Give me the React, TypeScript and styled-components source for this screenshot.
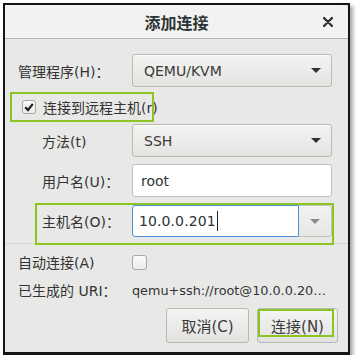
import React from "react";
import styled, { createGlobalStyle } from "styled-components";

const GlobalStyle = createGlobalStyle`
  html, body { margin: 0; padding: 0; background: #ffffff; }
  body { font-family: "DejaVu Sans", "Noto Sans CJK SC", sans-serif; font-size: 14px; color: #2e3436; }
`;

const Frame = styled.div`
  margin: 3px 0 0 3px;
  width: 343px;
  border: 2px solid #151515;
  border-bottom-width: 3px;
  background: #e8e8e7;
  box-shadow: 3px 3px 4px rgba(0, 0, 0, 0.35);
`;

const TitleBar = styled.div`
  height: 33px;
  display: flex;
  align-items: center;
  justify-content: center;
  position: relative;
  background: #f2f2f2;
  border-bottom: 1px solid #b4b4b2;
  border-top-right-radius: 6px;
`;

const Title = styled.div`
  font-family: "Noto Sans CJK SC", sans-serif;
  font-weight: 700;
  font-size: 16px;
  color: #2e3436;
`;

const CloseButton = styled.div`
  position: absolute;
  right: 15px;
  top: 12px;
  width: 10px;
  height: 10px;
  display: flex;
`;

const Body = styled.div`
  display: flex;
  flex-direction: column;
  padding-bottom: 9px;
`;

const Row = styled.div<{ $h: number; $mt: number }>`
  position: relative;
  height: ${(p) => p.$h}px;
  margin-top: ${(p) => p.$mt}px;
  display: grid;
  grid-template-columns: 127px 200px;
  align-items: center;
`;

const Label = styled.div<{ $indent?: boolean }>`
  padding-left: ${(p) => (p.$indent ? 37 : 13)}px;
  white-space: nowrap;
  color: #333;
`;

const Combo = styled.div`
  height: 33px;
  box-sizing: border-box;
  border: 1px solid #b8b8b5;
  border-radius: 3px;
  background: linear-gradient(#f3f3f2, #e4e4e2);
  box-shadow: 0 1px 0 rgba(255, 255, 255, 0.8) inset;
  display: flex;
  align-items: center;
  justify-content: space-between;
  padding: 0 10px 0 11px;
  color: #3a3a3a;
`;

const Arrow = styled.div<{ $color?: string }>`
  width: 0;
  height: 0;
  border-left: 5px solid transparent;
  border-right: 5px solid transparent;
  border-top: 5px solid ${(p) => p.$color || "#2e3436"};
`;

const Entry = styled.div`
  height: 33px;
  box-sizing: border-box;
  border: 1px solid #c0c0bd;
  border-radius: 3px;
  background: #ffffff;
  display: flex;
  align-items: center;
  padding-left: 8px;
  color: #2e3436;
`;

const HostCombo = styled.div`
  height: 32px;
  display: flex;
`;

const HostEntry = styled.div`
  flex: 1;
  box-sizing: border-box;
  border: 1px solid #4a90d9;
  border-radius: 3px 0 0 3px;
  background: #ffffff;
  display: flex;
  align-items: center;
  padding-left: 6px;
  color: #2e3436;
  letter-spacing: 0.1px;
`;

const Caret = styled.span`
  display: inline-block;
  width: 1px;
  height: 20px;
  background: #222;
  margin-left: 1px;
`;

const HostButton = styled.div`
  width: 33px;
  box-sizing: border-box;
  border: 1px solid #c4c4c1;
  border-left: none;
  border-radius: 0 3px 3px 0;
  background: linear-gradient(#f3f3f2, #e6e6e4);
  display: flex;
  align-items: center;
  justify-content: center;
`;

const CheckRow = styled.label`
  grid-column: 1 / span 2;
  display: flex;
  align-items: center;
  padding-left: 17px;
  gap: 7px;
  color: #333;
`;

const CheckBox = styled.div<{ $size: number }>`
  width: ${(p) => p.$size}px;
  height: ${(p) => p.$size}px;
  box-sizing: border-box;
  border: 1px solid #a8a8a6;
  border-radius: 3px;
  background: linear-gradient(#fafafa, #ececeb);
  display: flex;
  align-items: center;
  justify-content: center;
`;

const Highlight = styled.div<{ $l: number; $t: number; $w: number; $hh: number }>`
  position: absolute;
  left: ${(p) => p.$l}px;
  top: ${(p) => p.$t}px;
  width: ${(p) => p.$w}px;
  height: ${(p) => p.$hh}px;
  box-sizing: border-box;
  border: 2px solid #8cc425;
  pointer-events: none;
`;

const Separator = styled.div`
  height: 1px;
  margin-top: 6px;
  background: #d3d3d1;
`;

const UriText = styled.div`
  white-space: nowrap;
  font-size: 12.8px;
  color: #333;
`;

const ButtonRow = styled.div`
  display: flex;
  justify-content: flex-end;
  gap: 8px;
  margin-top: 8px;
  padding-right: 10px;
`;

const Button = styled.div<{ $w: number }>`
  position: relative;
  width: ${(p) => p.$w}px;
  height: 35px;
  box-sizing: border-box;
  border: 1px solid #b8b8b5;
  border-radius: 3px;
  background: linear-gradient(#f4f4f3, #e2e2e0);
  display: flex;
  align-items: center;
  justify-content: center;
  color: #3a3a3a;
  font-size: 15px;
`;

export default function App() {
  return (
    <>
      <GlobalStyle />
      <Frame>
        <TitleBar>
          <Title>添加连接</Title>
          <CloseButton>
            <svg width="10" height="10" viewBox="0 0 10 10">
              <path d="M1 1 L9 9 M9 1 L1 9" stroke="#2e3436" strokeWidth="2.4" strokeLinecap="round" />
            </svg>
          </CloseButton>
        </TitleBar>
        <Body>
          <Row $h={33} $mt={15}>
            <Label>管理程序(H)：</Label>
            <Combo>
              <span>QEMU/KVM</span>
              <Arrow />
            </Combo>
          </Row>
          <Row $h={31} $mt={4}>
            <CheckRow>
              <CheckBox $size={14}>
                <svg width="10" height="10" viewBox="0 0 10 10">
                  <path d="M1.2 5.2 L4 8 L8.8 1.8" fill="none" stroke="#1e1e1e" strokeWidth="2.2" />
                </svg>
              </CheckBox>
              <span>连接到远程主机(r)</span>
            </CheckRow>
            <Highlight $l={5} $t={1} $w={144} $hh={30} />
          </Row>
          <Row $h={33} $mt={2}>
            <Label $indent>方法(t)</Label>
            <Combo>
              <span>SSH</span>
              <Arrow />
            </Combo>
          </Row>
          <Row $h={33} $mt={7}>
            <Label $indent>用户名(U)：</Label>
            <Entry>root</Entry>
          </Row>
          <Row $h={32} $mt={8}>
            <Label $indent>主机名(O)：</Label>
            <HostCombo>
              <HostEntry>
                10.0.0.201
                <Caret />
              </HostEntry>
              <HostButton>
                <Arrow $color="#8a8a8a" />
              </HostButton>
            </HostCombo>
            <Highlight $l={30} $t={-2} $w={299} $hh={42} />
          </Row>
          <Separator />
          <Row $h={18} $mt={8}>
            <Label>自动连接(A)</Label>
            <CheckBox $size={15} />
          </Row>
          <Row $h={20} $mt={10}>
            <Label>已生成的 URI：</Label>
            <UriText>qemu+ssh://root@10.0.0.20…</UriText>
          </Row>
          <ButtonRow>
            <Button $w={83}>取消(C)</Button>
            <Button $w={81}>
              连接(N)
              <Highlight $l={0} $t={0} $w={76} $hh={28} />
            </Button>
          </ButtonRow>
        </Body>
      </Frame>
    </>
  );
}
